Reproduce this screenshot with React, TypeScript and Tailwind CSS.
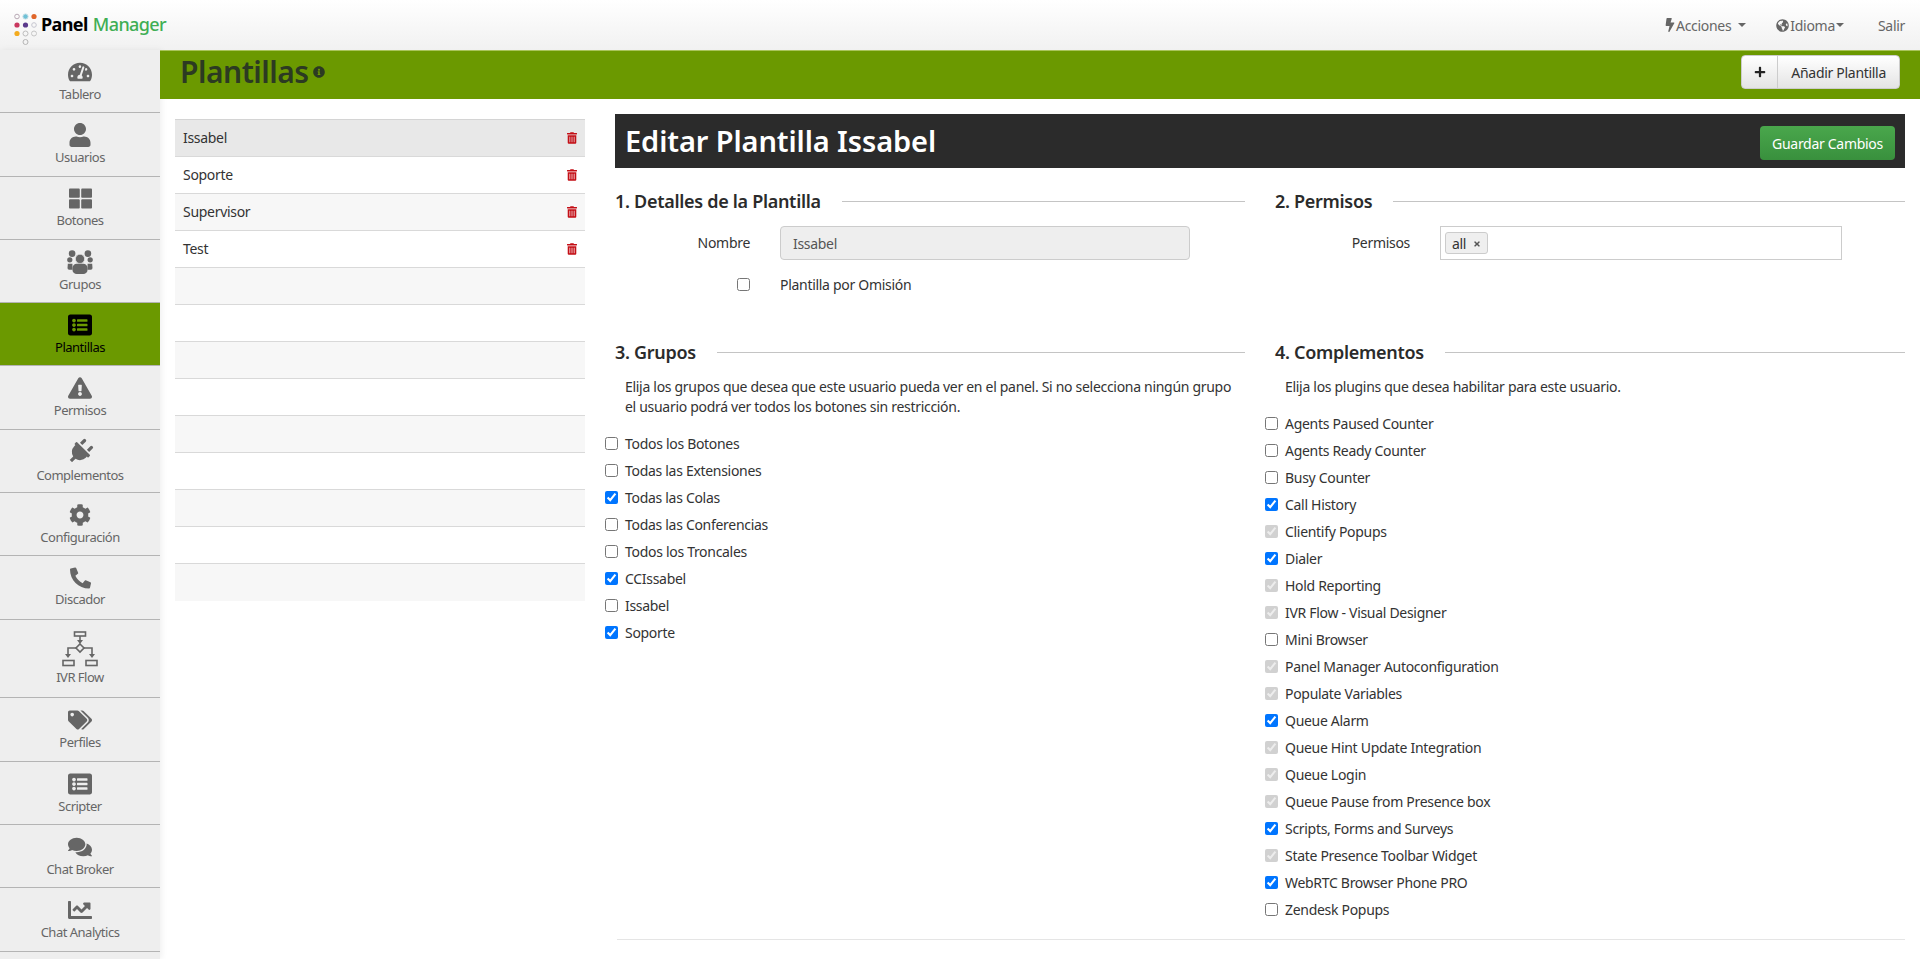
import type { ReactNode } from "react";
import {
  FaBolt,
  FaChartLine,
  FaCog,
  FaComments,
  FaExclamationTriangle,
  FaGlobeAmericas,
  FaInfoCircle,
  FaListAlt,
  FaPhoneAlt,
  FaPlug,
  FaPlus,
  FaTachometerAlt,
  FaTags,
  FaThLarge,
  FaTimes,
  FaTrashAlt,
  FaUser,
} from "react-icons/fa";

function FlowIcon() {
  return (
    <svg viewBox="0 0 36 36" className="w-9 h-9 text-[#666]" fill="none" stroke="currentColor" strokeWidth="1.6">
      <rect x="12.5" y="1" width="11" height="4" />
      <path d="M18 5v5M14 17H6v7M22 17h8v7" />
      <path d="M18 13l4 4-4 4-4-4z" />
      <path d="M15 9h6l-3 4zM3 23h6l-3 4zM27 23h6l-3 4z" fill="currentColor" stroke="none" />
      <rect x="1" y="29.5" width="11" height="5" />
      <rect x="24" y="29.5" width="11" height="5" />
    </svg>
  );
}

function GroupIcon() {
  return (
    <svg viewBox="0 0 78 73" className="w-[26px] h-[24px]" fill="currentColor">
      <circle cx="15" cy="11" r="10" />
      <circle cx="63" cy="11" r="10" />
      <circle cx="8" cy="30" r="8" />
      <circle cx="70" cy="30" r="8" />
      <path d="M2 42h14v18H6a5 5 0 01-5-5zM62 42h14l1 13a5 5 0 01-5 5H62z" />
      <circle cx="39" cy="27" r="14" stroke="#eeeeee" strokeWidth="2" />
      <rect x="16" y="42" width="46" height="31" rx="13" />
    </svg>
  );
}

function Logo() {
  return (
    <svg viewBox="0 0 36 44" className="w-9 h-11 shrink-0" strokeWidth="1">
      <circle cx="15" cy="14.5" r="2.3" fill="none" stroke="#b9a9b5" />
      <circle cx="23.5" cy="14.5" r="2.6" fill="#6fc1d6" stroke="#c4dfe6" />
      <circle cx="32" cy="14.5" r="2.6" fill="#e0662a" />
      <circle cx="15" cy="23" r="2.6" fill="#c9385f" />
      <circle cx="23.5" cy="23" r="2.6" fill="#5b3a8c" />
      <circle cx="32" cy="23" r="2.3" fill="none" stroke="#c6c6d0" />
      <circle cx="15" cy="31.5" r="2.6" fill="#f3ab1f" />
      <circle cx="23.5" cy="31.5" r="2.5" fill="none" stroke="#bdbdbd" />
      <circle cx="32" cy="31.5" r="2.5" fill="none" stroke="#c6c6c6" />
      <circle cx="23.5" cy="40" r="2.5" fill="none" stroke="#b5b5b5" />
    </svg>
  );
}

type NavItem = { label: string; icon: ReactNode; height: string; active?: boolean };

const ic = "w-6 h-6";

const navItems: NavItem[] = [
  { label: "Tablero", icon: <FaTachometerAlt className={ic} />, height: "h-[63px]" },
  { label: "Usuarios", icon: <FaUser className={ic} />, height: "h-[64px]" },
  { label: "Botones", icon: <FaThLarge className="w-[23px] h-[23px]" />, height: "h-[63px]" },
  { label: "Grupos", icon: <GroupIcon />, height: "h-[63px]" },
  { label: "Plantillas", icon: <FaListAlt className={ic} />, height: "h-[63px]", active: true },
  { label: "Permisos", icon: <FaExclamationTriangle className={ic} />, height: "h-[64px]" },
  { label: "Complementos", icon: <FaPlug className="w-[26px] h-[26px] rotate-45" />, height: "h-[63px]" },
  { label: "Configuración", icon: <FaCog className="w-[22px] h-[24px]" />, height: "h-[63px]" },
  { label: "Discador", icon: <FaPhoneAlt className="w-[21px] h-[22px]" />, height: "h-[64px]" },
  { label: "IVR Flow", icon: <FlowIcon />, height: "h-[78px]" },
  { label: "Perfiles", icon: <FaTags className={ic} />, height: "h-[64px]" },
  { label: "Scripter", icon: <FaListAlt className={ic} />, height: "h-[63px]" },
  { label: "Chat Broker", icon: <FaComments className={ic} />, height: "h-[63px]" },
  { label: "Chat Analytics", icon: <FaChartLine className={ic} />, height: "h-[64px]" },
];

const templates = ["Issabel", "Soporte", "Supervisor", "Test", "", "", "", "", "", "", "", "", ""];

type Check = { label: string; checked?: boolean; disabled?: boolean };

const groups: Check[] = [
  { label: "Todos los Botones" },
  { label: "Todas las Extensiones" },
  { label: "Todas las Colas", checked: true },
  { label: "Todas las Conferencias" },
  { label: "Todos los Troncales" },
  { label: "CCIssabel", checked: true },
  { label: "Issabel" },
  { label: "Soporte", checked: true },
];

const plugins: Check[] = [
  { label: "Agents Paused Counter" },
  { label: "Agents Ready Counter" },
  { label: "Busy Counter" },
  { label: "Call History", checked: true },
  { label: "Clientify Popups", checked: true, disabled: true },
  { label: "Dialer", checked: true },
  { label: "Hold Reporting", checked: true, disabled: true },
  { label: "IVR Flow - Visual Designer", checked: true, disabled: true },
  { label: "Mini Browser" },
  { label: "Panel Manager Autoconfiguration", checked: true, disabled: true },
  { label: "Populate Variables", checked: true, disabled: true },
  { label: "Queue Alarm", checked: true },
  { label: "Queue Hint Update Integration", checked: true, disabled: true },
  { label: "Queue Login", checked: true, disabled: true },
  { label: "Queue Pause from Presence box", checked: true, disabled: true },
  { label: "Scripts, Forms and Surveys", checked: true },
  { label: "State Presence Toolbar Widget", checked: true, disabled: true },
  { label: "WebRTC Browser Phone PRO", checked: true },
  { label: "Zendesk Popups" },
];

function SectionTitle({ children }: { children: ReactNode }) {
  return (
    <div className="flex items-center gap-[21px] h-[24px]">
      <h3 className="text-[18px] font-semibold text-[#2b2b2b] tracking-[-0.3px]">{children}</h3>
      <div className="flex-1 h-px bg-[#c4c4c4]" />
    </div>
  );
}

function CheckList({ items }: { items: Check[] }) {
  return (
    <div className="flex flex-col">
      {items.map((item) => (
        <label key={item.label} className="flex items-center h-[27px] gap-[7px]">
          <input
            type="checkbox"
            defaultChecked={item.checked}
            disabled={item.disabled}
            className="w-[13px] h-[13px] m-0"
          />
          <span>{item.label}</span>
        </label>
      ))}
    </div>
  );
}

export default function App() {
  return (
    <div className="h-screen overflow-hidden flex flex-col bg-white text-[14px] text-[#333] font-['Noto_Sans',sans-serif] tracking-[-0.3px]">
      <header className="h-[50px] shrink-0 flex items-center justify-between bg-gradient-to-b from-white to-[#f1f1f1] pl-[2px] pr-[15px]">
        <div className="flex items-center -mt-[2px]">
          <Logo />
          <span className="text-[18px] font-bold text-black ml-[3px] tracking-[-0.6px]">Panel</span>
          <span className="text-[18px] font-medium text-[#3fae54] ml-[5px] tracking-[-0.6px]">Manager</span>
        </div>
        <nav className="flex items-center text-[#666]">
          <FaBolt className="w-[10px] h-[14px] mr-[1px]" />
          <span>Acciones</span>
          <span className="ml-[7px] border-x-[4px] border-t-[4px] border-x-transparent border-t-[#666]" />
          <FaGlobeAmericas className="w-[13px] h-[13px] ml-[30px] mr-[1px]" />
          <span>Idioma</span>
          <span className="ml-[1px] border-x-[4px] border-t-[4px] border-x-transparent border-t-[#666]" />
          <span className="ml-[34px]">Salir</span>
        </nav>
      </header>

      <div className="flex flex-1 min-h-0">
        <aside className="w-[160px] shrink-0 bg-[#eeeeee] shadow-[2px_0_6px_rgba(0,0,0,0.06)]">
          {navItems.map((item) => (
            <div
              key={item.label}
              className={`${item.height} flex flex-col items-center justify-center gap-[1px] border-b border-[#b4b4b4] text-[13px] tracking-[-0.5px] ${
                item.active ? "bg-[#6b9900] text-black" : "text-[#666]"
              }`}
            >
              {item.icon}
              <span className="leading-[18px]">{item.label}</span>
            </div>
          ))}
        </aside>

        <main className="flex-1 min-w-0 flex flex-col">
          <div className="h-[49px] shrink-0 bg-[#6b9900] flex justify-between pl-[20px] pr-[20px] border-t border-[#a9c45a]">
            <div className="flex items-center gap-[4px] -mt-[6px]">
              <h1 className="text-[30px] leading-[36px] font-semibold text-[#2c3a22] tracking-[-0.5px]">Plantillas</h1>
              <FaInfoCircle className="w-[12px] h-[12px] text-[#2c3a22] -mt-[1px]" />
            </div>
            <div className="flex h-[34px] mt-[4px] rounded-[4px] border border-[#ccc] bg-gradient-to-b from-white to-[#e4e4e4] text-[#333]">
              <span className="w-[36px] flex items-center justify-center border-r border-[#ccc]">
                <FaPlus className="w-[12px] h-[12px] text-[#222]" />
              </span>
              <span className="px-[13px] flex items-center">Añadir Plantilla</span>
            </div>
          </div>

          <div className="flex flex-1 min-h-0">
            <ul className="w-[410px] ml-[15px] mt-[20px] shrink-0 self-start border-t border-[#d4d4d4]">
              {templates.map((name, i) => (
                <li
                  key={i}
                  className={`h-[37px] flex items-center justify-between px-2 ${i < 12 ? "border-b border-[#d9d9d9]" : ""} ${
                    i === 0 ? "bg-[#e8e8e8]" : i % 2 === 0 ? "bg-[#f7f7f7]" : "bg-white"
                  }`}
                >
                  <span className="-mt-[2px]">{name}</span>
                  {name && <FaTrashAlt className="w-[10px] h-[12px] text-[#c40f16]" />}
                </li>
              ))}
            </ul>

            <section className="w-[1290px] ml-[30px] mt-[15px]">
              <div className="h-[54px] bg-[#2b2b2b] flex items-center justify-between pl-[10px] pr-[10px]">
                <h2 className="text-[29px] font-semibold text-white tracking-[-0.1px]">Editar Plantilla Issabel</h2>
                <button className="w-[135px] h-[34px] mt-[4px] rounded-[4px] bg-gradient-to-b from-[#4aa74c] to-[#39903d] text-white">
                  Guardar Cambios
                </button>
              </div>

              <div className="grid grid-cols-2 gap-x-[30px] mt-[21px]">
                <div className="h-[151px]">
                  <SectionTitle>1. Detalles de la Plantilla</SectionTitle>
                  <div className="flex items-center mt-[13px]">
                    <span className="w-[135px] text-right -mt-[1px]">Nombre</span>
                    <div className="ml-[30px] w-[410px] h-[34px] rounded-[4px] border border-[#ccc] bg-[#eeeeee] px-3 flex items-center text-[#555]">
                      Issabel
                    </div>
                  </div>
                  <div className="flex items-center mt-[14px] h-[20px]">
                    <input type="checkbox" className="w-[13px] h-[13px] ml-[122px]" />
                    <span className="ml-[30px]">Plantilla por Omisión</span>
                  </div>
                </div>

                <div className="h-[151px]">
                  <SectionTitle>2. Permisos</SectionTitle>
                  <div className="flex items-center mt-[13px]">
                    <span className="w-[135px] text-right -mt-[1px]">Permisos</span>
                    <div className="ml-[30px] w-[402px] h-[34px] border border-[#ccc] bg-white px-1 flex items-center">
                      <span className="flex items-center gap-[7px] h-[22px] px-[6px] rounded-[3px] border border-[#ccc] bg-[#efefef]">
                        all
                        <FaTimes className="w-[8px] h-[8px] text-[#555] mt-[2px]" />
                      </span>
                    </div>
                  </div>
                </div>

                <div>
                  <SectionTitle>3. Grupos</SectionTitle>
                  <p className="mt-[13px] ml-[10px] leading-[20px]">
                    Elija los grupos que desea que este usuario pueda ver en el panel. Si no selecciona ningún grupo
                    <br />
                    el usuario podrá ver todos los botones sin restricción.
                  </p>
                  <div className="mt-[13px] -ml-[10px]">
                    <CheckList items={groups} />
                  </div>
                </div>

                <div>
                  <SectionTitle>4. Complementos</SectionTitle>
                  <p className="mt-[13px] ml-[10px] leading-[20px]">Elija los plugins que desea habilitar para este usuario.</p>
                  <div className="mt-[13px] -ml-[10px]">
                    <CheckList items={plugins} />
                  </div>
                </div>
              </div>

              <div className="mt-[16px] h-px bg-[#e5e5e5] ml-[2px]" />
            </section>
          </div>
        </main>
      </div>
    </div>
  );
}
